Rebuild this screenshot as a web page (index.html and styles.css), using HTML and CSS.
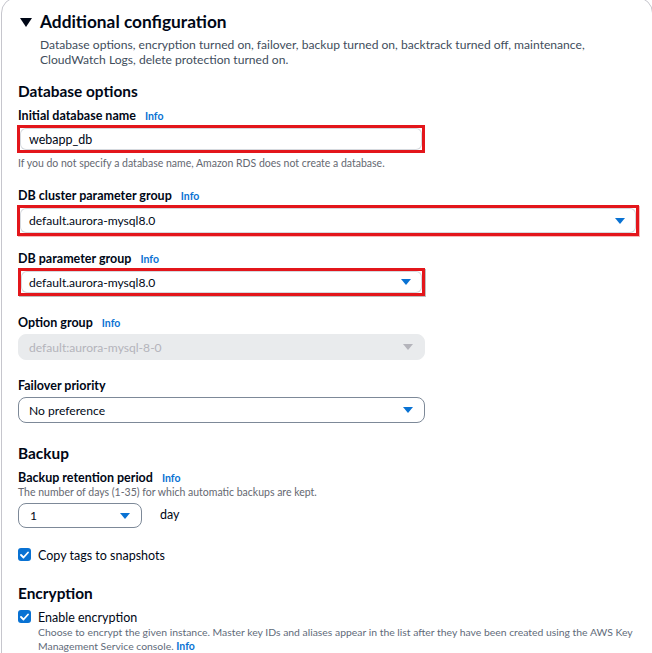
FILE: index.html
```html
<!DOCTYPE html>
<html lang="en">
<head>
<meta charset="utf-8">
<title>Additional configuration</title>
<link rel="stylesheet" href="styles.css">
</head>
<body>
<div class="card">
  <div class="header">
    <svg class="tri" width="12" height="10" viewBox="0 0 12 10"><polygon points="0,1 12,1 6,10" fill="#000716"/></svg>
    <div class="header-text">
      <h2 class="title">Additional configuration</h2>
      <p class="desc">Database options, encryption turned on, failover, backup turned on, backtrack turned off, maintenance, CloudWatch Logs, delete protection turned on.</p>
    </div>
  </div>

  <h3 class="section s-db">Database options</h3>

  <div class="label l1">Initial database name <span class="info">Info</span></div>
  <div class="redbox rb1"><div class="input">webapp_db</div></div>
  <div class="hint">If you do not specify a database name, Amazon RDS does not create a database.</div>

  <div class="label l2">DB cluster parameter group <span class="info">Info</span></div>
  <div class="redbox rb2"><div class="input select">default.aurora-mysql8.0<span class="caret"></span></div></div>

  <div class="label l3">DB parameter group <span class="info">Info</span></div>
  <div class="redbox rb3"><div class="input select">default.aurora-mysql8.0<span class="caret"></span></div></div>

  <div class="label l4">Option group <span class="info">Info</span></div>
  <div class="sel disabled">default:aurora-mysql-8-0<span class="caret grey"></span></div>

  <div class="label l5">Failover priority</div>
  <div class="sel">No preference<span class="caret"></span></div>

  <h3 class="section s-backup">Backup</h3>
  <div class="label l6">Backup retention period <span class="info">Info</span></div>
  <div class="hint h2">The number of days (1-35) for which automatic backups are kept.</div>
  <div class="retention">
    <div class="sel small">1<span class="caret"></span></div>
    <span class="unit">day</span>
  </div>

  <div class="check c1">
    <span class="box"><svg width="9" height="8" viewBox="0 0 9 8"><polyline points="1,4 3.5,6.5 8,1.5" fill="none" stroke="#fff" stroke-width="1.8" stroke-linecap="round" stroke-linejoin="round"/></svg></span>
    <span class="check-label">Copy tags to snapshots</span>
  </div>

  <h3 class="section s-enc">Encryption</h3>
  <div class="check c2">
    <span class="box"><svg width="9" height="8" viewBox="0 0 9 8"><polyline points="1,4 3.5,6.5 8,1.5" fill="none" stroke="#fff" stroke-width="1.8" stroke-linecap="round" stroke-linejoin="round"/></svg></span>
    <div class="check-body">
      <span class="check-label">Enable encryption</span>
      <p class="check-desc">Choose to encrypt the given instance. Master key IDs and aliases appear in the list after they have been created using the AWS Key Management Service console. <span class="info inline">Info</span></p>
    </div>
  </div>
</div>
</body>
</html>
```

FILE: styles.css
```css
* { box-sizing: border-box; }
html, body { margin: 0; padding: 0; background: #fff; }
body {
  width: 652px;
  height: 653px;
  overflow: hidden;
  font-family: Lato, "Open Sans", sans-serif;
  color: #000716;
}
.card {
  margin: -3px 0 0 1px;
  width: 652px;
  height: 700px;
  border: 1px solid #c6c6cd;
  border-radius: 16px;
  padding: 0 0 0 16px;
  display: flex;
  flex-direction: column;
  align-items: flex-start;
}
.header {
  display: flex;
  align-items: flex-start;
  gap: 8px;
  margin-top: 13px;
  padding-left: 2px;
}
.tri { margin-top: 6px; flex: none; }
.title {
  margin: 0;
  font-size: 17.3px;
  line-height: 22px;
  font-weight: 700;
}
.desc {
  margin: 4px 0 0;
  font-size: 12.1px;
  line-height: 15px;
  color: #414d5c;
  width: 560px;
}
.section {
  margin: 0;
  font-size: 15.4px;
  line-height: 20px;
  font-weight: 700;
}
.s-db { margin-top: 14px; }
.s-backup { margin-top: 20px; }
.s-enc { margin-top: 20px; }
.label {
  font-size: 12.5px;
  line-height: 16px;
  padding-top: 1px;
  font-weight: 700;
}
.info {
  color: #0972d3;
  font-weight: 700;
  font-size: 10.5px;
  margin-left: 6px;
}
.info.inline { margin-left: 0; }
.l1 { margin-top: 6px; }
.l2 { margin-top: 17px; }
.l3 { margin-top: 14px; }
.l4 { margin-top: 18px; }
.l5 { margin-top: 17px; }
.l6 { margin-top: 6px; }
.redbox {
  border: 3px solid #e3161b;
  margin-top: 1px;
  position: relative;
}
.rb1 { width: 408px; height: 28px; margin-left: -1px; }
.rb2 { width: 622px; height: 31px; margin-left: -1px; box-shadow: 1px 1px 0 rgba(227,22,27,0.3); }
.rb3 { width: 407px; height: 28px; box-shadow: 1px 1px 0 rgba(0,0,0,0.25); }
.input {
  height: 100%;
  border-radius: 6px;
  box-shadow: inset 0 0 0 1px #d5d9de;
  display: flex;
  align-items: center;
  padding-left: 9px;
  font-size: 12.5px;
  position: relative;
}
.input.select { font-size: 12.1px; }
.rb3 .input { padding-left: 8px; }
.hint {
  margin-top: 3px;
  font-size: 10.5px;
  line-height: 14px;
  color: #656871;
}
.hint.h2 { margin-top: -1px; }
.sel {
  margin-top: 3px;
  width: 407px;
  height: 26px;
  border: 1px solid #7d8998;
  border-radius: 8px;
  display: flex;
  align-items: center;
  padding-left: 10px;
  font-size: 12.1px;
  position: relative;
}
.sel.disabled {
  background: #e9ebed;
  border-color: #e9ebed;
  color: #b4b4bb;
}
.caret {
  position: absolute;
  right: 11px;
  top: 50%;
  margin-top: -3px;
  width: 0;
  height: 0;
  border-left: 5px solid transparent;
  border-right: 5px solid transparent;
  border-top: 6px solid #0972d3;
}
.caret.grey { border-top-color: #b4b4bb; }
.retention {
  display: flex;
  align-items: flex-start;
  gap: 18px;
  margin-top: 4px;
}
.retention .sel { margin-top: 0; }
.sel.small { width: 124px; height: 25px; padding-left: 11px; }
.unit { font-size: 12.5px; line-height: 18px; margin-top: 3px; }
.check {
  display: flex;
  align-items: flex-start;
  gap: 7px;
}
.c1 { margin-top: 20px; }
.c2 { margin-top: 7px; }
.box {
  flex: none;
  width: 13px;
  height: 13px;
  border-radius: 3px;
  background: #0972d3;
  display: flex;
  align-items: center;
  justify-content: center;
}
.check-body { display: flex; flex-direction: column; }
.check-label {
  display: block;
  font-size: 12.5px;
  line-height: 14px;
  padding-top: 1px;
}
.check-desc {
  margin: 0;
  font-size: 10.4px;
  line-height: 14px;
  color: #5f6b7a;
  width: 600px;
}
```
